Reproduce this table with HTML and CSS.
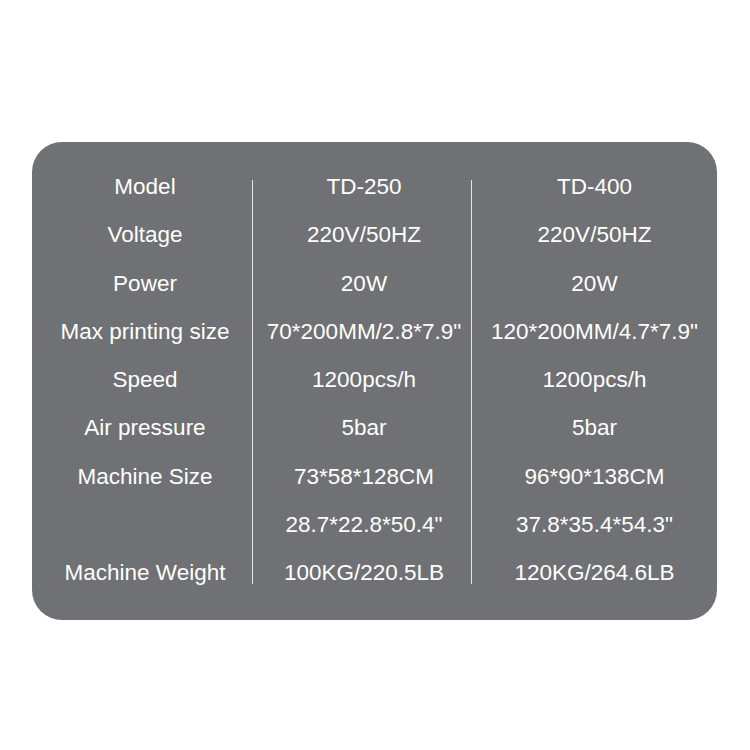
FILE: index.html
```html
<!DOCTYPE html>
<html>
<head>
<meta charset="utf-8">
<link rel="stylesheet" href="styles.css">
</head>
<body>
<div class="card">
  <div class="col c1">
    <div class="cell">Model</div>
    <div class="cell">Voltage</div>
    <div class="cell">Power</div>
    <div class="cell">Max printing size</div>
    <div class="cell">Speed</div>
    <div class="cell">Air pressure</div>
    <div class="cell">Machine Size</div>
    <div class="cell"></div>
    <div class="cell">Machine Weight</div>
  </div>
  <div class="divider"></div>
  <div class="col c2">
    <div class="cell">TD-250</div>
    <div class="cell">220V/50HZ</div>
    <div class="cell">20W</div>
    <div class="cell">70*200MM/2.8*7.9"</div>
    <div class="cell">1200pcs/h</div>
    <div class="cell">5bar</div>
    <div class="cell">73*58*128CM</div>
    <div class="cell">28.7*22.8*50.4"</div>
    <div class="cell">100KG/220.5LB</div>
  </div>
  <div class="divider"></div>
  <div class="col c3">
    <div class="cell">TD-400</div>
    <div class="cell">220V/50HZ</div>
    <div class="cell">20W</div>
    <div class="cell">120*200MM/4.7*7.9"</div>
    <div class="cell">1200pcs/h</div>
    <div class="cell">5bar</div>
    <div class="cell">96*90*138CM</div>
    <div class="cell">37.8*35.4*54.3"</div>
    <div class="cell">120KG/264.6LB</div>
  </div>
</div>
</body>
</html>
```

FILE: styles.css
```css
html, body {
  margin: 0;
  padding: 0;
  background: #ffffff;
}

body {
  padding-top: 142px;
  padding-left: 32px;
  font-family: "Liberation Sans", Arial, sans-serif;
}

.card {
  width: 685px;
  box-sizing: border-box;
  padding: 21px 0 23px 0;
  background: #6f7174;
  border-radius: 30px;
  display: flex;
  color: #ffffff;
  font-size: 22.5px;
}

.col {
  display: flex;
  flex-direction: column;
}

.c1 {
  width: 220px;
  padding-left: 6px;
  box-sizing: border-box;
}

.c2 {
  width: 218px;
  padding-left: 4px;
  box-sizing: border-box;
}

.c3 {
  flex: 1;
}

.cell {
  height: 48.25px;
  line-height: 48.25px;
  text-align: center;
  white-space: nowrap;
}

.divider {
  width: 1px;
  background: #e2e3e4;
  margin: 17px 0 13px 0;
}
```
